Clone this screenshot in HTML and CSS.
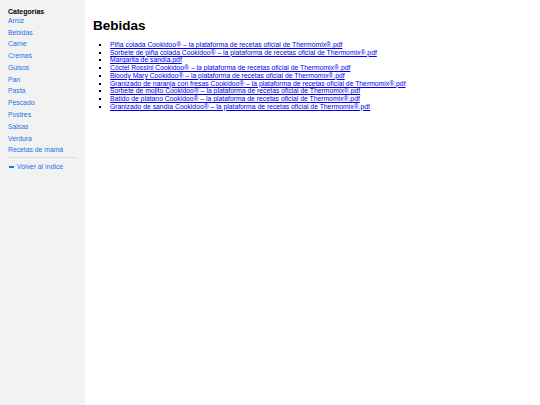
FILE: index.html
```html
<!DOCTYPE html>
<html lang="es">
<head>
<meta charset="utf-8">
<title>Bebidas</title>
<link rel="stylesheet" href="styles.css">
</head>
<body>
<div class="layout">
  <nav class="sidebar">
    <div class="cat-title">Categorías</div>
    <ul class="cats">
      <li><a href="#">Arroz</a></li>
      <li><a href="#">Bebidas</a></li>
      <li><a href="#">Carne</a></li>
      <li><a href="#">Cremas</a></li>
      <li><a href="#">Guisos</a></li>
      <li><a href="#">Pan</a></li>
      <li><a href="#">Pasta</a></li>
      <li><a href="#">Pescado</a></li>
      <li><a href="#">Postres</a></li>
      <li><a href="#">Salsas</a></li>
      <li><a href="#">Verdura</a></li>
      <li><a href="#">Recetas de mamá</a></li>
    </ul>
    <hr class="sep">
    <a class="back" href="#"><span class="arrow"></span>Volver al índice</a>
  </nav>
  <main class="content">
    <h1 class="title">Bebidas</h1>
    <ul class="files">
      <li><a href="#">Piña colada Cookidoo® – la plataforma de recetas oficial de Thermomix®.pdf</a></li>
      <li><a href="#">Sorbete de piña colada Cookidoo® – la plataforma de recetas oficial de Thermomix®.pdf</a></li>
      <li><a href="#">Margarita de sandía.pdf</a></li>
      <li><a href="#">Cóctel Rossini Cookidoo® – la plataforma de recetas oficial de Thermomix®.pdf</a></li>
      <li><a href="#">Bloody Mary Cookidoo® – la plataforma de recetas oficial de Thermomix®.pdf</a></li>
      <li><a href="#">Granizado de naranja con fresas Cookidoo® – la plataforma de recetas oficial de Thermomix®.pdf</a></li>
      <li><a href="#">Sorbete de mojito Cookidoo® – la plataforma de recetas oficial de Thermomix®.pdf</a></li>
      <li><a href="#">Batido de plátano Cookidoo® – la plataforma de recetas oficial de Thermomix®.pdf</a></li>
      <li><a href="#">Granizado de sandía Cookidoo® – la plataforma de recetas oficial de Thermomix®.pdf</a></li>
    </ul>
  </main>
</div>
</body>
</html>
```
FILE: styles.css
```css
html, body {
  margin: 0;
  padding: 0;
  height: 100%;
}
body {
  font-family: "Liberation Sans", Arial, sans-serif;
  background: #ffffff;
  color: #000;
}
.layout {
  display: flex;
  min-height: 100%;
}
.sidebar {
  width: 85px;
  flex: none;
  box-sizing: border-box;
  background: #f2f2f2;
  padding: 7px 8px;
}
.cat-title {
  font-weight: bold;
  font-size: 7px;
  line-height: 9px;
}
.cats {
  list-style: none;
  margin: 0;
  padding: 0;
}
.cats li {
  font-size: 6.8px;
  line-height: 11.8px;
}
.cats li:first-child {
  line-height: 9px;
  margin-bottom: 1.5px;
}
.sidebar a {
  color: #1a73e8;
  text-decoration: none;
}
.sep {
  border: none;
  border-top: 1.5px solid #dcdcdc;
  margin: 1px 0 4px;
}
.back {
  display: flex;
  align-items: center;
  gap: 3px;
  font-size: 6.8px;
  line-height: 10px;
}
.arrow {
  display: inline-block;
  width: 5px;
  height: 1.8px;
  margin-left: 1px;
  background: #1a73e8;
}
.content {
  flex: 1;
  padding: 17px 8px 0 8px;
}
.title {
  font-size: 13.5px;
  line-height: 18px;
  margin: 0 0 6px;
  font-weight: bold;
}
.files {
  margin: 0;
  padding-left: 17px;
  list-style: square;
}
.files li {
  font-size: 6.8px;
  line-height: 7.7px;
}
.files a {
  color: #0000ee;
}
```
